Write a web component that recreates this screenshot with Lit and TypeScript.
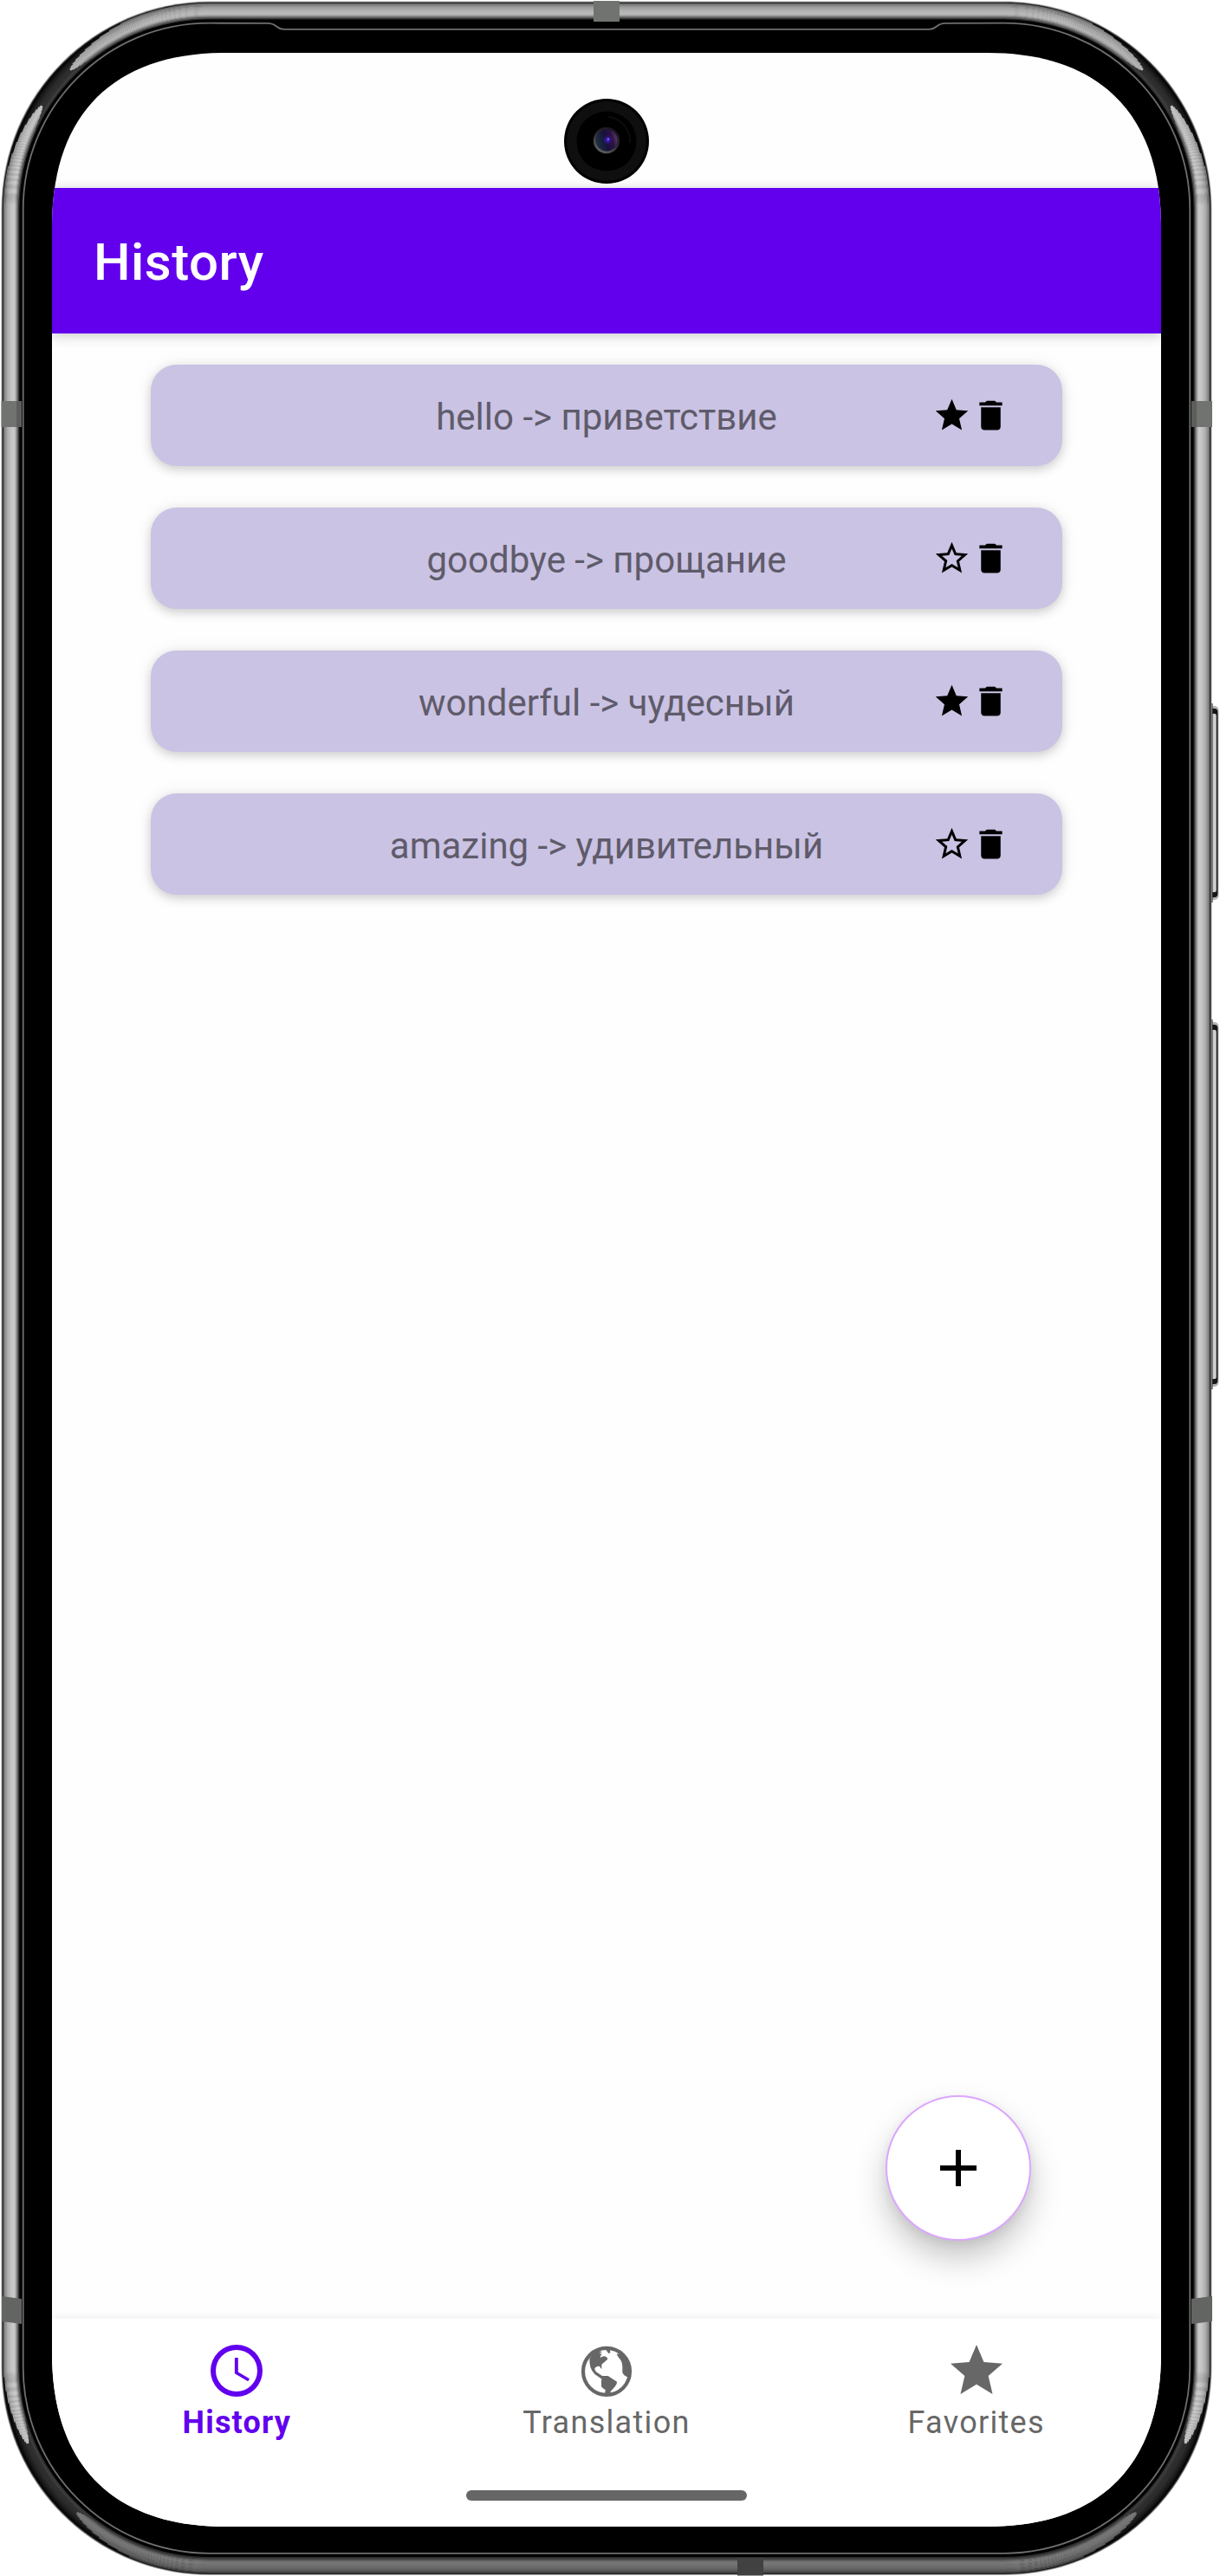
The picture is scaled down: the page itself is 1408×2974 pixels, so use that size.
import { LitElement, html, svg, css } from "lit";
import { customElement, property } from "lit/decorators.js";

type Pt = [number, number];

/* ---------- device shell geometry ---------- */

const BOX = { l: 1.5, t: 1.5, r: 1398.5, b: 2973 };

const lerp = (a: Pt, b: Pt, t: number): Pt => [a[0] + (b[0] - a[0]) * t, a[1] + (b[1] - a[1]) * t];

/** Corner curve, running from the vertical side to the horizontal one. */
const corner = (x: number, y: number, sx: number, sy: number, d: number): Pt[] => {
  const L = 240 - d;
  const k = L * 0.4477;
  const ox = x + sx * d;
  const oy = y + sy * d;
  return [
    [ox, oy + sy * L],
    [ox, oy + sy * k],
    [ox + sx * k, oy],
    [ox + sx * L, oy],
  ];
};

const corners = (d: number) => ({
  tl: corner(BOX.l, BOX.t, 1, 1, d),
  tr: corner(BOX.r, BOX.t, -1, 1, d),
  br: corner(BOX.r, BOX.b, -1, -1, d),
  bl: corner(BOX.l, BOX.b, 1, -1, d),
});

const p = (a: Pt) => `${a[0].toFixed(2)} ${a[1].toFixed(2)}`;
const rev = (c: Pt[]) => [...c].reverse();
const curve = (c: Pt[]) => `C${p(c[1])} ${p(c[2])} ${p(c[3])}`;

/** First part of a cubic, up to t. */
const head = (c: Pt[], t: number): Pt[] => {
  const a = lerp(c[0], c[1], t);
  const b = lerp(c[1], c[2], t);
  const e = lerp(c[2], c[3], t);
  const ab = lerp(a, b, t);
  const be = lerp(b, e, t);
  return [c[0], a, ab, lerp(ab, be, t)];
};

const outline = (d: number) => {
  const c = corners(d);
  return `M${p(c.tl[0])}${curve(c.tl)}L${p(c.tr[3])}${curve(rev(c.tr))}L${p(c.br[0])}${curve(c.br)}L${p(c.bl[3])}${curve(rev(c.bl))}Z`;
};

/** Highlight strip between two partially covered corners. */
const strip = (from: Pt[], to: Pt[], ta: number, tb: number) => {
  const a = rev(head(from, ta));
  const b = head(to, tb);
  return `M${p(a[0])}${curve(a)}L${p(b[0])}${curve(b)}`;
};

const BASE: [number, string][] = [
  [0, "#a2a2a2"], [0.9, "#3a3a3a"], [1.8, "#080808"], [4.5, "#161616"], [7, "#222"],
  [10, "#2c2c2c"], [14, "#303030"], [17, "#3c3c3c"], [19.5, "#2c2c2c"], [21, "#000"],
];

const TONES = [0x70, 0x80, 0x90, 0x9c, 0xa8, 0xb0, 0xb6, 0xbb, 0xc0, 0xc4, 0xc7, 0xca, 0xc8, 0xbc, 0xa4, 0x84, 0x64];

const gray = (v: number) => `rgb(${v},${v},${v})`;

const highlights = () =>
  TONES.map((tone, i) => {
    const d = 3 + i;
    const c = corners(d);
    const q = ((i - 10) / 10) ** 2 * 0.22;
    const side = gray(Math.round(tone));
    const top = gray(Math.round(tone * 0.92));
    const bottom = gray(Math.round(tone * 0.61));
    return svg`
      <path d=${strip(c.tl, c.bl, 0.35 - q, 0.25 - q)} stroke=${side} />
      <path d=${strip(c.tr, c.br, 0.35 - q, 0.25 - q)} stroke=${side} />
      <path d=${strip(rev(c.tl), rev(c.tr), 0.5 - q, 0.5 - q)} stroke=${top} />
      <path d=${strip(rev(c.bl), rev(c.br), 0.47 - q, 0.47 - q)} stroke=${bottom} />`;
  });

const innerLine = () => {
  const c = corners(25.2);
  return (
    `M328 33.8C318 33.8 320 26.9 309 26.9L${p(c.tl[3])}${curve(rev(c.tl))}` +
    `L${p(c.bl[0])}${curve(c.bl)}` +
    `L${p(c.br[3])}${curve(rev(c.br))}` +
    `L${p(c.tr[0])}${curve(c.tr)}L1091 26.9C1080 26.9 1082 33.8 1072 33.8Z`
  );
};

@customElement("device-shell")
export class DeviceShell extends LitElement {
  static styles = css`
    :host { display: block; }
    svg { display: block; }
  `;
  render() {
    return html`<svg width="1408" height="2974" viewBox="0 0 1408 2974" fill="none">
      ${[[816, 222], [1181, 419]].map(
        ([y, h]) => svg`
          <rect x="1390" y=${y - 1} width="16.5" height=${h + 2} rx="5" fill="#b5b5b5" />
          <rect x="1390" y=${y + 2} width="15.4" height=${h - 4} rx="4" fill="#161616" />
          <rect x="1390" y=${y + 8} width="13.8" height=${h - 16} rx="2" fill="#cfcfcf" />
          <rect x="1398" y=${y - 4} width="1.6" height=${h + 8} fill="#444" />`
      )}
      ${BASE.map(([d, fill]) => svg`<path d=${outline(d)} fill=${fill} />`)}
      <g stroke-width="1.3">${highlights()}</g>
      <path d=${innerLine()} stroke="#6e6e6e" stroke-width="1.8" />
      <g fill="#70736f">
        <rect x="1.5" y="463" width="23.5" height="30" />
        <rect x="1375" y="463" width="24" height="30" />
        <rect x="685" y="1" width="30" height="24" />
      </g>
      <g fill="#626561">
        <path d="M2 2651L25 2654V2683L2 2680Z" />
        <path d="M1399 2651L1375 2654V2683L1399 2680Z" />
      </g>
      <rect x="851" y="2953" width="30" height="20.5" fill="#414141" />
      <g fill="#4a4d49" opacity="0.55">
        <rect x="19" y="463" width="6" height="30" />
        <rect x="1375" y="463" width="6" height="30" />
      </g>
    </svg>`;
  }
}

@customElement("front-camera")
export class FrontCamera extends LitElement {
  static styles = css`
    :host { display: block; width: 98px; height: 98px; }
    svg { display: block; }
  `;
  render() {
    return html`<svg width="98" height="98" viewBox="-49 -49 98 98">
      <defs>
        <linearGradient id="rim" x1="0.2" y1="1" x2="0.8" y2="0">
          <stop offset="0" stop-color="#6a6a6a" /><stop offset="0.5" stop-color="#2b2b2f" /><stop offset="1" stop-color="#16101a" />
        </linearGradient>
        <linearGradient id="lens" x1="0" y1="0.6" x2="1" y2="0.35">
          <stop offset="0" stop-color="#1c3440" /><stop offset="0.45" stop-color="#17123a" />
          <stop offset="0.75" stop-color="#2a1046" /><stop offset="1" stop-color="#5e3a6c" />
        </linearGradient>
        <radialGradient id="glow">
          <stop offset="0" stop-color="#5a34e0" /><stop offset="0.35" stop-color="#351b9a" /><stop offset="1" stop-color="#2a1670" stop-opacity="0" />
        </radialGradient>
      </defs>
      <circle r="49" fill="#000" />
      <circle r="46" fill="#0f0f0f" />
      <circle r="34.5" fill="#000" />
      <path d="M2 -28A28 28 0 0 1 27 2" fill="none" stroke="#0d0d0f" stroke-width="2" />
      <circle cy="-1" r="15.2" fill="url(#rim)" />
      <circle cy="-1" r="12.4" fill="url(#lens)" />
      <circle cx="1.5" cy="-1.5" r="6" fill="url(#glow)" />
      <circle cx="2" cy="-2.5" r="1.1" fill="#8f6bff" />
    </svg>`;
  }
}

/* ---------- icons ---------- */

const STAR = "M12 17.27L18.18 21l-1.64-7.03L22 9.24l-7.19-.61L12 2 9.19 8.63 2 9.24l5.46 4.73L5.82 21z";

const icons = {
  star: svg`<path d=${STAR} />`,
  starOutline: svg`<path d="M22 9.24l-7.19-.62L12 2 9.19 8.63 2 9.24l5.46 4.73L5.82 21 12 17.27 18.18 21l-1.63-7.03L22 9.24zM12 15.4l-3.76 2.27 1-4.28-3.32-2.88 4.38-.38L12 6.1l1.71 4.04 4.38.38-3.32 2.88 1 4.28L12 15.4z" />`,
  trash: svg`<path d="M6 19c0 1.1.9 2 2 2h8c1.1 0 2-.9 2-2V7H6v12zM19 4h-3.5l-1-1h-5l-1 1H5v2h14V4z" />`,
  clock: svg`<path d="M12 2a10 10 0 1 0 0 20a10 10 0 1 0 0-20zM12 20a8 8 0 1 1 0-16a8 8 0 1 1 0 16z" />
    <path d="M12.6 7h-1.3v6.1l5.1 3 .6-1-4.4-2.6z" />`,
  globe: svg`<g transform="scale(0.111111)"><circle cx="108" cy="110.500" r="81" fill="none" stroke="currentColor" stroke-width="12.500" />
    <path d="M49 66L62 48L80 38L93 43L83 48L92 50Q86 56 86 63Q94 57 102 58Q111 60 112 68L91 86V102Q86 98 84 93Q74 89 67 100Q66 107 72 112L93 126H113L144 146Q145 154 138 162L122 180V190H102L104 174Q92 168 90 162V142L92 137L68 121Q56 108 52 95Q49 84 49 66Z" />
    <path d="M97 35Q106 33 110 41L115 48L121 46L120 36L108 32Z" />
    <path d="M143 50L158 48L178 66L192 100L188 128L181 130Q169 127 163 115V98Q163 80 156 70Q146 58 143 50Z" /></g>`,
};

type IconName = keyof typeof icons;

const icon = (name: IconName, size: number) =>
  html`<svg width=${size} height=${size} viewBox="0 0 24 24" fill="currentColor">${icons[name]}</svg>`;

/* ---------- application ---------- */

@customElement("history-card")
export class HistoryCard extends LitElement {
  @property() word = "";
  @property() translation = "";
  @property({ type: Boolean }) starred = false;

  static styles = css`
    :host {
      display: grid;
      grid-template-columns: 150px 1fr 150px;
      align-items: center;
      height: 117px;
      border-radius: 30px;
      background: #cac3e4;
      box-shadow: 0 4px 12px rgba(0, 0, 0, 0.17), 0 0 22px rgba(0, 0, 0, 0.06);
    }
    .text {
      grid-column: 2;
      text-align: center;
      white-space: nowrap;
      color: #5f5b6a;
      font-size: 42px;
      line-height: 50px;
      padding-top: 4px;
    }
    .actions { display: flex; color: #000; }
    svg { display: block; }
  `;
  render() {
    return html`<div class="text">${this.word} -&gt; ${this.translation}</div>
      <div class="actions">${icon(this.starred ? "star" : "starOutline", 45)}${icon("trash", 45)}</div>`;
  }
}

@customElement("app-root")
export class AppRoot extends LitElement {
  private entries = [
    { word: "hello", translation: "приветствие", starred: true },
    { word: "goodbye", translation: "прощание", starred: false },
    { word: "wonderful", translation: "чудесный", starred: true },
    { word: "amazing", translation: "удивительный", starred: false },
  ];
  private tabs: { label: string; icon: IconName; active: boolean }[] = [
    { label: "History", icon: "clock", active: true },
    { label: "Translation", icon: "globe", active: false },
    { label: "Favorites", icon: "star", active: false },
  ];

  static styles = css`
    :host { display: block; font-family: Roboto, "Noto Sans", sans-serif; }
    .phone {
      position: relative;
      box-sizing: border-box;
      width: 1408px;
      height: 2974px;
      padding: 61px 0 0 60px;
      background: #fff;
      overflow: hidden;
    }
    device-shell { position: absolute; inset: 0; }
    .screen {
      position: relative;
      display: flex;
      flex-direction: column;
      width: 1280px;
      height: 2856px;
      background: #fefefe;
      clip-path: path("M0 200C0 71 71 0 200 0H1080C1209 0 1280 71 1280 200V2656C1280 2785 1209 2856 1080 2856H200C71 2856 0 2785 0 2656Z");
    }
    .status { display: flex; justify-content: center; align-items: flex-start; height: 103px; padding-top: 53px; }
    .bar {
      position: relative;
      display: flex;
      align-items: center;
      flex: none;
      height: 168px;
      padding-left: 48px;
      background: #6200ee;
      color: #fff;
      font-size: 60px;
      font-weight: 500;
      box-shadow: 0 4px 14px rgba(0, 0, 0, 0.14), 0 0 12px rgba(0, 0, 0, 0.08);
    }
    .title { line-height: 70px; padding-top: 4px; letter-spacing: 0.5px; }
    .list { display: flex; flex-direction: column; gap: 48px; padding: 36px 114px 0; flex: 1; }
    .fab {
      position: absolute;
      right: 150px;
      bottom: 330px;
      display: flex;
      align-items: center;
      justify-content: center;
      box-sizing: border-box;
      width: 168px;
      height: 168px;
      border: 2px solid #dba6ff;
      border-radius: 50%;
      background: #fff;
      box-shadow: 0 20px 36px rgba(0, 0, 0, 0.22), 0 4px 12px rgba(0, 0, 0, 0.07);
    }
    .nav {
      display: flex;
      flex: none;
      height: 168px;
      background: #fff;
      color: #676767;
      box-shadow: 0 -1px 10px rgba(0, 0, 0, 0.07);
    }
    .tab { flex: 1; display: flex; flex-direction: column; align-items: center; padding-top: 24px; }
    .tab svg { display: block; }
    .label { font-size: 36px; line-height: 42px; letter-spacing: 1.3px; margin-top: 3px; }
    .active { color: #6200ee; }
    .active .label { font-weight: 700; letter-spacing: 1.2px; }
    .gesture { display: flex; justify-content: center; flex: none; height: 72px; background: #fff; }
    .handle { width: 324px; height: 12px; margin-top: 30px; border-radius: 6px; background: #666; }
  `;

  render() {
    return html`<div class="phone">
      <device-shell></device-shell>
      <div class="screen">
        <div class="status"><front-camera></front-camera></div>
        <header class="bar"><div class="title">History</div></header>
        <main class="list">
          ${this.entries.map(
            (e) => html`<history-card .word=${e.word} .translation=${e.translation} .starred=${e.starred}></history-card>`
          )}
        </main>
        <nav class="nav">
          ${this.tabs.map(
            (t) => html`<div class="tab ${t.active ? "active" : ""}">${icon(t.icon, 72)}<div class="label">${t.label}</div></div>`
          )}
        </nav>
        <div class="gesture"><div class="handle"></div></div>
        <div class="fab">
          <svg width="42" height="42" viewBox="0 0 42 42"><path d="M18 0h6v18h18v6H24v18h-6V24H0v-6h18z" /></svg>
        </div>
      </div>
    </div>`;
  }
}
